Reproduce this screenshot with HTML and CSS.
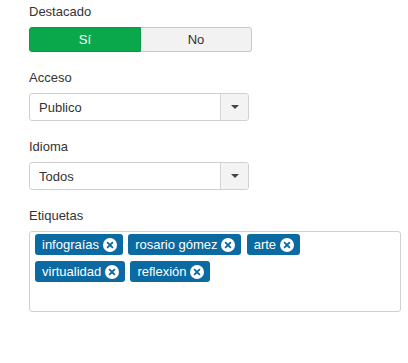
FILE: index.html
```html
<!DOCTYPE html>
<html lang="es">
<head>
<meta charset="utf-8">
<title>Form</title>
<link rel="stylesheet" href="styles.css">
</head>
<body>
<div class="form">
  <div class="group">
    <div class="label">Destacado</div>
    <div class="toggle">
      <span class="opt opt-yes">Sí</span>
      <span class="opt opt-no">No</span>
    </div>
  </div>
  <div class="group">
    <div class="label">Acceso</div>
    <div class="select">
      <span class="value">Publico</span>
      <span class="caret-btn"><span class="caret"></span></span>
    </div>
  </div>
  <div class="group">
    <div class="label">Idioma</div>
    <div class="select">
      <span class="value">Todos</span>
      <span class="caret-btn"><span class="caret"></span></span>
    </div>
  </div>
  <div class="group">
    <div class="label">Etiquetas</div>
    <div class="tags">
      <span class="tag">infograías <span class="x"><svg viewBox="0 0 14 14" width="14" height="14"><circle cx="7" cy="7" r="7" fill="#fff"/><path d="M4.6 4.6 9.4 9.4M9.4 4.6 4.6 9.4" stroke="#0b6aa2" stroke-width="1.8" stroke-linecap="round"/></svg></span></span>
      <span class="tag">rosario gómez <span class="x"><svg viewBox="0 0 14 14" width="14" height="14"><circle cx="7" cy="7" r="7" fill="#fff"/><path d="M4.6 4.6 9.4 9.4M9.4 4.6 4.6 9.4" stroke="#0b6aa2" stroke-width="1.8" stroke-linecap="round"/></svg></span></span>
      <span class="tag">arte <span class="x"><svg viewBox="0 0 14 14" width="14" height="14"><circle cx="7" cy="7" r="7" fill="#fff"/><path d="M4.6 4.6 9.4 9.4M9.4 4.6 4.6 9.4" stroke="#0b6aa2" stroke-width="1.8" stroke-linecap="round"/></svg></span></span>
      <span class="tag">virtualidad <span class="x"><svg viewBox="0 0 14 14" width="14" height="14"><circle cx="7" cy="7" r="7" fill="#fff"/><path d="M4.6 4.6 9.4 9.4M9.4 4.6 4.6 9.4" stroke="#0b6aa2" stroke-width="1.8" stroke-linecap="round"/></svg></span></span>
      <span class="tag">reflexión <span class="x"><svg viewBox="0 0 14 14" width="14" height="14"><circle cx="7" cy="7" r="7" fill="#fff"/><path d="M4.6 4.6 9.4 9.4M9.4 4.6 4.6 9.4" stroke="#0b6aa2" stroke-width="1.8" stroke-linecap="round"/></svg></span></span>
    </div>
  </div>
</div>
</body>
</html>
```
FILE: styles.css
```css
html, body {
  margin: 0;
  padding: 0;
  background: #fff;
}
body {
  font-family: "Liberation Sans", Arial, sans-serif;
  font-size: 13px;
  color: #333;
}
.form {
  display: flex;
  flex-direction: column;
  gap: 17px;
  padding: 3px 0 0 29px;
}
.group {
  display: flex;
  flex-direction: column;
  gap: 6px;
}
.label {
  line-height: 18px;
  height: 18px;
}
.toggle {
  display: flex;
  width: 223px;
  height: 25px;
  box-sizing: border-box;
}
.opt {
  flex: 1;
  display: flex;
  align-items: center;
  justify-content: center;
  box-sizing: border-box;
}
.opt-yes {
  background: #0aa84a;
  color: #fff;
  border: 1px solid #0a9a44;
  border-radius: 3px 0 0 3px;
}
.opt-no {
  background: #f2f2f2;
  color: #333;
  border: 1px solid #c8c8c8;
  border-left: none;
  border-radius: 0 3px 3px 0;
}
.select {
  display: flex;
  width: 220px;
  height: 28px;
  box-sizing: border-box;
  border: 1px solid #d0d0d0;
  border-radius: 3px;
  background: #fff;
}
.value {
  flex: 1;
  display: flex;
  align-items: center;
  padding-left: 9px;
}
.caret-btn {
  width: 27px;
  display: flex;
  align-items: center;
  justify-content: center;
  background: #f3f3f3;
  border-left: 1px solid #d6d6d6;
  border-radius: 0 3px 3px 0;
}
.caret {
  width: 0;
  height: 0;
  border-left: 4px solid transparent;
  border-right: 4px solid transparent;
  border-top: 4px solid #444;
}
.tags {
  width: 372px;
  height: 81px;
  box-sizing: border-box;
  border: 1px solid #d0d0d0;
  border-radius: 3px;
  padding: 2px 5px;
  display: flex;
  flex-wrap: wrap;
  align-content: flex-start;
  column-gap: 5.5px;
  row-gap: 6px;
}
.tag {
  display: inline-flex;
  align-items: center;
  height: 21px;
  box-sizing: border-box;
  padding: 0 6px 0 7px;
  background: #0b6aa2;
  color: #fff;
  border-radius: 3px;
  white-space: pre;
}
.x {
  display: inline-flex;
  margin-left: 0;
}
.x svg {
  display: block;
}
```
